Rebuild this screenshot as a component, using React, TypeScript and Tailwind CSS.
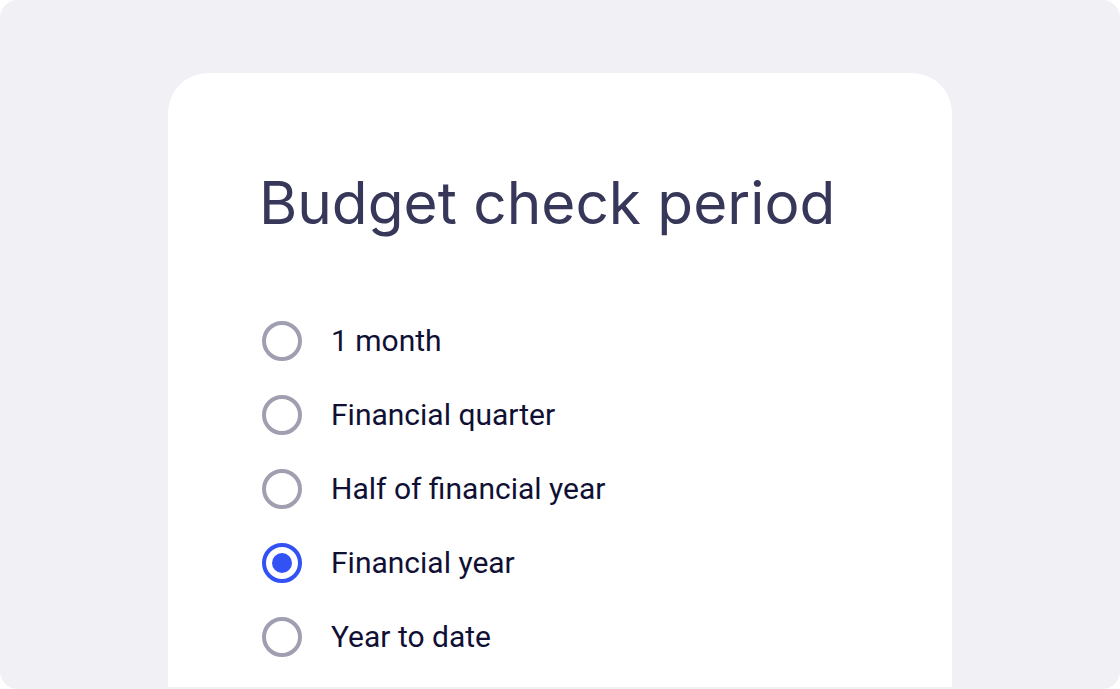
import React, { useState } from 'react';

const OPTIONS = ['1 month', 'Financial quarter', 'Half of financial year', 'Financial year', 'Year to date'];

const App: React.FC = () => {
  const [selected, setSelected] = useState('Financial year');

  return (
    <div className="w-[1120px] h-[689px] bg-white">
      <div className="h-full rounded-[18px] bg-[#f0f0f5] overflow-hidden pt-[73px] pb-[2px]">
        {/* Card */}
        <div className="ml-[168px] w-[784px] h-full rounded-t-[40px] bg-white pl-[94px] pt-[101px]">
          <h1 className="-ml-[3px] text-[58.5px] leading-[1] text-[#363759] font-['Inter',sans-serif] font-normal">
            Budget check period
          </h1>

          <div className="mt-[88px] flex flex-col gap-[34px]">
            {OPTIONS.map((opt) => {
              const active = opt === selected;
              return (
                <label
                  key={opt}
                  onClick={() => setSelected(opt)}
                  className="flex items-center gap-[29px] h-[40px] cursor-pointer"
                >
                  <span
                    className={
                      active
                        ? 'w-[40px] h-[40px] rounded-full border-[4px] border-[#3352f5] flex items-center justify-center'
                        : 'w-[40px] h-[40px] rounded-full border-[4px] border-[#a09fb1]'
                    }
                  >
                    {active && <span className="w-[20px] h-[20px] rounded-full bg-[#3352f5]" />}
                  </span>
                  <span className="text-[30px] text-[#101035] font-['Roboto',sans-serif]">{opt}</span>
                </label>
              );
            })}
          </div>
        </div>
      </div>
    </div>
  );
};

export default App;
